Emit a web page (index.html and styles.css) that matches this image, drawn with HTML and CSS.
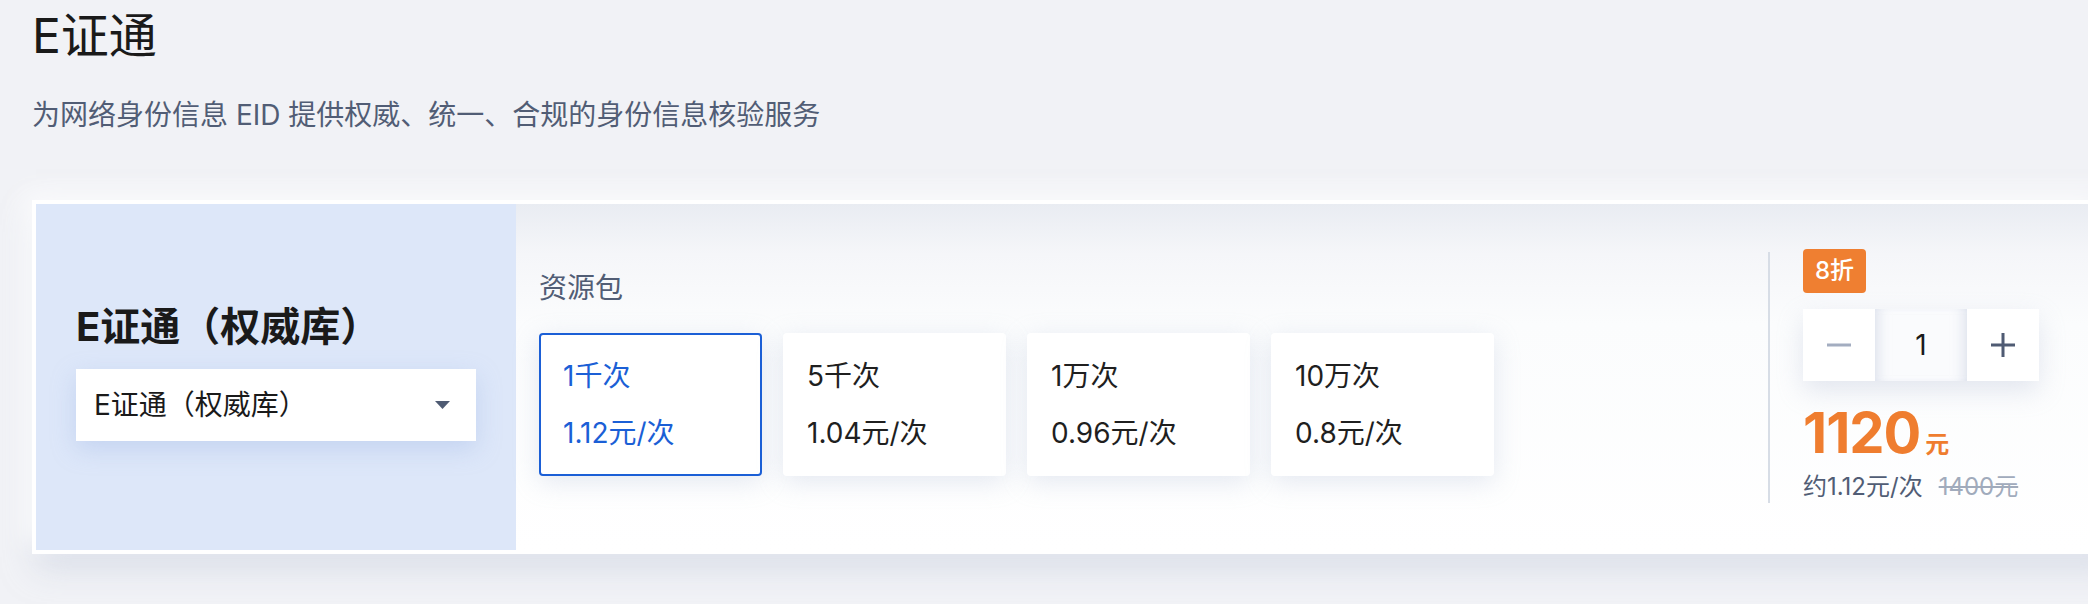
FILE: index.html
```html
<!DOCTYPE html>
<html lang="zh-CN">
<head>
<meta charset="utf-8">
<title>E证通</title>
<link rel="stylesheet" href="styles.css">
</head>
<body>
<div class="page">
  <header class="intro">
    <h1 class="title">E证通</h1>
    <p class="desc">为网络身份信息 EID 提供权威、统一、合规的身份信息核验服务</p>
  </header>

  <section class="product-card">
    <div class="product-side">
      <h2 class="product-name">E证通（权威库）</h2>
      <div class="select">
        <span class="select-text">E证通（权威库）</span>
        <svg class="caret" width="15" height="8" viewBox="0 0 15 8"><path d="M0 0 H15 L7.5 8 Z" fill="#4f5b73"/></svg>
      </div>
    </div>

    <div class="spec">
      <div class="spec-label">资源包</div>
      <div class="packs">
        <div class="pack is-active">
          <div class="pack-line">1千次</div>
          <div class="pack-line">1.12元/次</div>
        </div>
        <div class="pack">
          <div class="pack-line">5千次</div>
          <div class="pack-line">1.04元/次</div>
        </div>
        <div class="pack">
          <div class="pack-line">1万次</div>
          <div class="pack-line">0.96元/次</div>
        </div>
        <div class="pack">
          <div class="pack-line">10万次</div>
          <div class="pack-line">0.8元/次</div>
        </div>
      </div>
    </div>

    <div class="buy">
      <span class="badge">8折</span>
      <div class="stepper">
        <div class="step step-minus">
          <svg width="24" height="24" viewBox="0 0 24 24"><path d="M0 12 H24" stroke="#a3adc0" stroke-width="3"/></svg>
        </div>
        <div class="step-value">1</div>
        <div class="step step-plus">
          <svg width="24" height="24" viewBox="0 0 24 24"><path d="M0 12 H24 M12 0 V24" stroke="#4f5b73" stroke-width="3"/></svg>
        </div>
      </div>
      <div class="price"><span class="price-num">1120</span><span class="price-unit">元</span></div>
      <div class="price-sub"><span class="per">约1.12元/次</span><s class="origin">1400元</s></div>
    </div>
  </section>
</div>
</body>
</html>
```

FILE: styles.css
```css
html, body {
  margin: 0;
  padding: 0;
}
body {
  background: #f1f2f6;
  font-family: Inter, "Noto Sans CJK SC", sans-serif;
  color: #1a1a1a;
  overflow: hidden;
}
.page {
  height: 604px;
  padding-left: 32px;
  box-sizing: border-box;
}
.intro {
  padding-top: 4px;
}
.title {
  margin: 0;
  font-size: 48px;
  line-height: 64px;
  font-weight: 400;
  color: #1a1a1a;
}
.desc {
  margin: 27px 0 0;
  font-size: 28px;
  line-height: 40px;
  color: #515d75;
}

.product-card {
  margin-top: 65px;
  width: 2072px;
  height: 346px;
  border: 4px solid #fff;
  display: flex;
  background: linear-gradient(180deg, #e9ecf2 0, #f5f6f9 50px, #fbfcfd 120px, #fff 100%);
  box-shadow: -10px -10px 24px rgba(255, 255, 255, 0.75), 4px 14px 30px rgba(196, 204, 220, 0.55);
}

.product-side {
  flex: 0 0 480px;
  box-sizing: border-box;
  padding: 0 40px 14px;
  background: #dde7f9;
  display: flex;
  flex-direction: column;
  justify-content: center;
}
.product-name {
  margin: 0;
  font-size: 40px;
  line-height: 56px;
  font-weight: 700;
  color: #1a1a1a;
}
.select {
  margin-top: 14px;
  height: 72px;
  background: #fff;
  display: flex;
  align-items: center;
  justify-content: space-between;
  padding: 0 26px 0 18px;
  box-shadow: 0 8px 24px rgba(150, 175, 225, 0.35);
}
.select-text {
  font-size: 28px;
  line-height: 40px;
  color: #1a1a1a;
}

.spec {
  flex: 0 0 1252px;
  box-sizing: border-box;
  padding: 0 23px 10px;
  display: flex;
  flex-direction: column;
  justify-content: center;
}
.spec-label {
  font-size: 28px;
  line-height: 40px;
  color: #515d75;
}
.packs {
  margin-top: 25px;
  display: flex;
  gap: 21px;
}
.pack {
  width: 223px;
  height: 143px;
  box-sizing: border-box;
  border: 2px solid #fff;
  border-radius: 4px;
  background: #fff;
  padding-left: 22px;
  display: flex;
  flex-direction: column;
  justify-content: center;
  gap: 17px;
  color: #1f1f1f;
  box-shadow: 0 6px 26px rgba(170, 182, 210, 0.3);
}
.pack.is-active {
  border-color: #1b5fd6;
  color: #1b5fd6;
}
.pack-line {
  font-size: 28px;
  line-height: 40px;
}

.buy {
  align-self: center;
  border-left: 2px solid #d7dde6;
  padding-left: 33px;
  display: flex;
  flex-direction: column;
  align-items: flex-start;
}
.badge {
  height: 44px;
  padding: 0 12px;
  line-height: 44px;
  font-size: 24px;
  font-weight: 500;
  color: #fff;
  background: #ef7f31;
  border-radius: 4px;
  margin-top: -3px;
}
.stepper {
  margin-top: 16px;
  display: flex;
  height: 72px;
  box-shadow: 0 10px 26px rgba(170, 180, 205, 0.3);
}
.step {
  width: 72px;
  height: 72px;
  background: #fff;
  display: flex;
  align-items: center;
  justify-content: center;
}
.step-value {
  width: 92px;
  height: 72px;
  background: #fafbfd;
  box-shadow: inset 12px 0 14px -10px rgba(190, 198, 218, 0.55), inset -12px 0 14px -10px rgba(190, 198, 218, 0.55);
  display: flex;
  align-items: center;
  justify-content: center;
  font-size: 28px;
  color: #1a1a1a;
}
.price {
  margin-top: 24px;
  font-size: 56px;
  line-height: 56px;
  color: #ef7d2f;
  font-weight: 700;
}
.price-num {
  letter-spacing: -1px;
}
.price-unit {
  font-size: 24px;
  line-height: 24px;
  margin-left: 5px;
}
.price-sub {
  margin-top: 10px;
  font-size: 24px;
  line-height: 32px;
  color: #515d75;
}
.origin {
  margin-left: 16px;
  color: #a1abbc;
}
```
